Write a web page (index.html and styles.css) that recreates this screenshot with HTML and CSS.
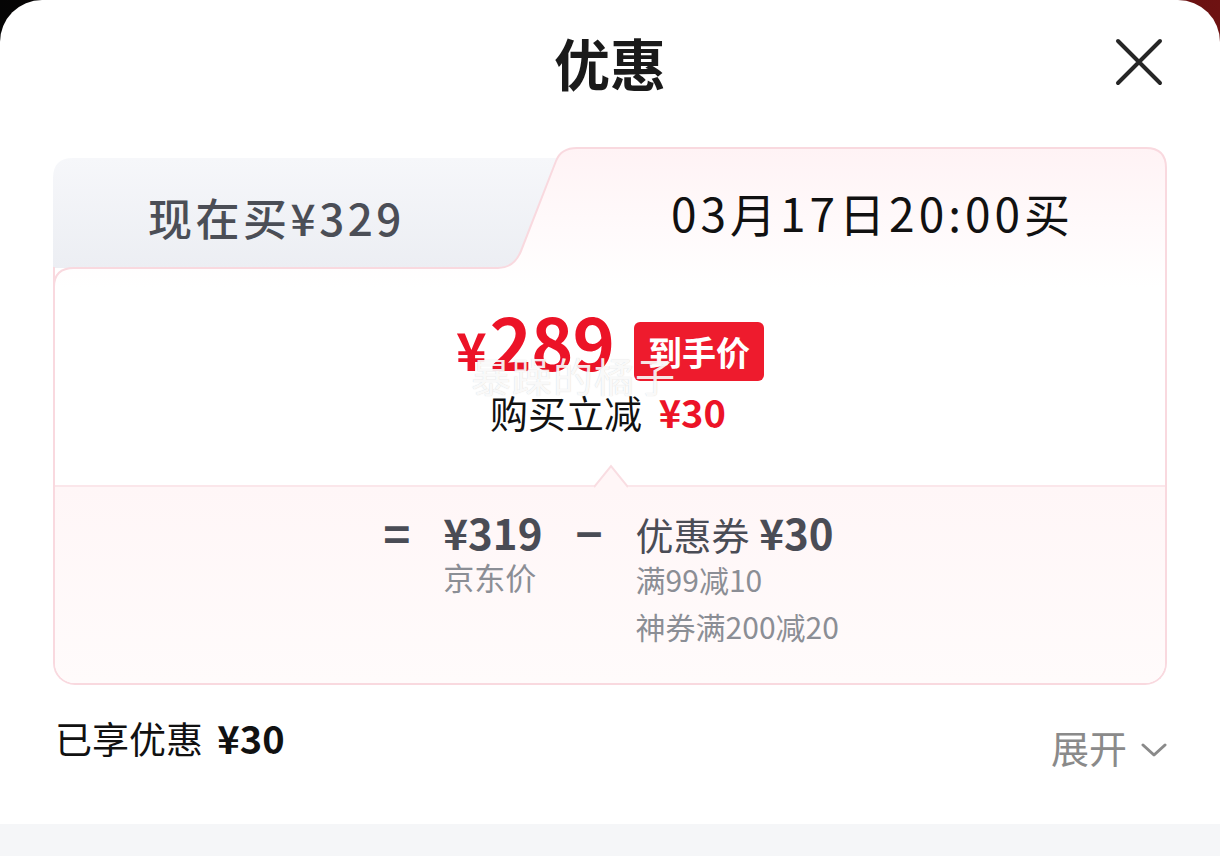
FILE: index.html
```html
<!DOCTYPE html>
<html lang="zh-CN">
<head>
  <meta charset="UTF-8">
  <meta name="viewport" content="width=device-width, initial-scale=1.0">
  <title>优惠</title>
  <link rel="stylesheet" href="styles.css">
</head>
<body>
<div class="sheet">
  <header class="sheet-head">
    <span></span>
    <h1 class="title">优惠</h1>
    <button class="close" aria-label="关闭">
      <svg viewBox="0 0 48 48" width="48" height="48">
        <path d="M3 3 L45 45 M45 3 L3 45" stroke="#262626" stroke-width="4" stroke-linecap="round" fill="none"/>
      </svg>
    </button>
  </header>

  <section class="card">
    <!-- tab outline drawn as one shape, sits behind the tab labels -->
    <svg class="tab-bg" viewBox="0 0 1114 140" width="1114" height="140">
      <defs>
        <linearGradient id="grayTab" x1="0" y1="0" x2="0" y2="1">
          <stop offset="0" stop-color="#f6f7fa"/>
          <stop offset="1" stop-color="#eceef3"/>
        </linearGradient>
        <linearGradient id="pinkTab" x1="0" y1="0" x2="0" y2="1">
          <stop offset="0" stop-color="#fff3f5"/>
          <stop offset="1" stop-color="#ffffff"/>
        </linearGradient>
      </defs>
      <path d="M0 31 Q0 11 20 11 L540 11 L540 121 L0 121 Z" fill="url(#grayTab)"/>
      <path d="M1 140 Q1 121 21 121 L445 121 Q461 121 468 104 L503 14 Q508 1 524 1 L1093 1 Q1113 1 1113 21 L1113 140 Z" fill="url(#pinkTab)"/>
      <path d="M1 140 Q1 121 21 121 L445 121 Q461 121 468 104 L503 14 Q508 1 524 1 L1093 1 Q1113 1 1113 21 L1113 140" fill="none" stroke="#f9d9df" stroke-width="2"/>
    </svg>

    <div class="tabs">
      <div class="tab tab-now">现在买¥329</div>
      <div class="tab tab-later">03月17日20:00买</div>
    </div>

    <div class="card-body">
      <div class="final">
        <div class="final-line">
          <span class="price"><span class="yen">¥</span>289</span>
          <span class="badge">到手价</span>
          <span class="watermark">暴躁的橘子</span>
        </div>
        <div class="saving">购买立减 <span class="saving-num">¥30</span></div>
      </div>

      <div class="breakdown">
        <svg class="notch" viewBox="0 0 34 24" width="34" height="24">
          <path d="M0 23 L17 2 L34 23" fill="#fff6f7" stroke="#f9dde2" stroke-width="2"/>
        </svg>
        <span class="op">=</span>
        <div class="term">
          <div class="amount">¥319</div>
          <div class="note">京东价</div>
        </div>
        <span class="op">−</span>
        <div class="term">
          <div class="amount"><span class="amount-label">优惠券</span> ¥30</div>
          <div class="note-list">
            <div>满99减10</div>
            <div>神券满200减20</div>
          </div>
        </div>
      </div>
    </div>
  </section>

  <div class="summary">
    <div class="enjoyed">已享优惠 <b>¥30</b></div>
    <div class="expand">
      展开
      <svg viewBox="0 0 26 16" width="26" height="16">
        <path d="M2 3 L13 13 L24 3" fill="none" stroke="#8a8a8a" stroke-width="3" stroke-linecap="round" stroke-linejoin="round"/>
      </svg>
    </div>
  </div>
</div>
<div class="bottom-band"></div>
</body>
</html>
```

FILE: styles.css
```css
* {
  box-sizing: border-box;
}

html, body {
  margin: 0;
  height: 100%;
}

body {
  font-family: "Noto Sans CJK SC", "Noto Sans", sans-serif;
  background: linear-gradient(90deg, #050505 0%, #2a0707 50%, #6e1212 100%);
  display: flex;
  flex-direction: column;
  overflow: hidden;
}

.sheet {
  height: 824px;
  background: #fff;
  border-radius: 42px 42px 0 0;
  padding: 0 53px;
}

.bottom-band {
  flex: 1;
  background: #f5f6f8;
}

/* header */
.sheet-head {
  display: grid;
  grid-template-columns: 1fr auto 1fr;
  align-items: start;
  height: 147px;
}

.title {
  margin: 0;
  padding-top: 34px;
  font-size: 56px;
  line-height: 56px;
  font-weight: 700;
  color: #1a1a1a;
}

.close {
  justify-self: end;
  margin: 38px 4px 0 0;
  padding: 0;
  border: 0;
  background: none;
  width: 48px;
  height: 48px;
}

.close svg {
  display: block;
}

/* card */
.card {
  position: relative;
}

.tab-bg {
  position: absolute;
  left: 0;
  top: 0;
  display: block;
}

.tabs {
  position: relative;
  display: flex;
  height: 120px;
}

.tab {
  display: flex;
  align-items: center;
  justify-content: center;
  white-space: nowrap;
}

.tab-now {
  flex: 0 0 445px;
  padding: 20px 0 0 2px;
  font-size: 44px;
  line-height: 50px;
  font-weight: 500;
  color: #4b4e56;
  letter-spacing: 3.5px;
}

.tab-later {
  flex: 1;
  padding: 10px 0 0 80px;
  font-size: 46px;
  line-height: 50px;
  color: #111;
  letter-spacing: 4px;
}

.card-body {
  position: relative;
  border: 2px solid #f9d9df;
  border-top: 0;
  border-radius: 0 0 22px 22px;
}

.final {
  height: 218px;
  padding-top: 41px;
  text-align: center;
}

.final-line {
  position: relative;
  display: flex;
  justify-content: center;
  align-items: center;
  height: 72px;
}

.price {
  font-size: 72px;
  line-height: 72px;
  font-weight: 700;
  color: #ec1327;
  letter-spacing: -1px;
}

.yen {
  font-size: 52px;
  margin-right: 4px;
}

.badge {
  margin: 14px 0 0 20px;
  padding: 0 14px;
  height: 59px;
  line-height: 59px;
  border-radius: 6px;
  background: #ee1b2d;
  color: #fff;
  font-size: 34px;
  font-weight: 700;
}

.watermark {
  position: absolute;
  left: 416px;
  top: 44px;
  font-size: 40px;
  line-height: 46px;
  color: rgba(255, 255, 255, 0.9);
  text-shadow: 0 0 1px rgba(120, 120, 120, 0.35);
  letter-spacing: 1px;
}

.saving {
  margin-top: 8px;
  padding-right: 4px;
  font-size: 38px;
  line-height: 48px;
  color: #111;
}

.saving-num {
  margin-left: 8px;
  font-size: 38px;
  font-weight: 700;
  color: #ec1327;
}

/* breakdown */
.breakdown {
  position: relative;
  display: flex;
  justify-content: center;
  align-items: flex-start;
  gap: 33px;
  height: 198px;
  padding: 20px 0 0 2px;
  border-top: 2px solid #fbe6ea;
  border-radius: 0 0 20px 20px;
  background: linear-gradient(180deg, #fff6f7 0%, #fffbfb 100%);
}

.notch {
  position: absolute;
  left: 50%;
  top: -23px;
  margin-left: -16px;
  display: block;
}

.op {
  font-size: 46px;
  line-height: 50px;
  font-weight: 700;
  color: #4a4c55;
}

.amount {
  padding-top: 3px;
  font-size: 42px;
  line-height: 44px;
  font-weight: 700;
  color: #4a4c55;
  white-space: nowrap;
}

.amount-label {
  font-size: 38px;
  font-weight: 400;
}

.note {
  margin-top: 3px;
  font-size: 31px;
  line-height: 40px;
  color: #8b8e95;
}

.note-list {
  font-size: 30px;
  line-height: 47px;
  color: #8b8e95;
}

/* summary row */
.summary {
  display: flex;
  justify-content: space-between;
  align-items: flex-start;
  padding: 30px 0 0 2px;
}

.enjoyed {
  font-size: 37px;
  line-height: 46px;
  color: #111;
}

.enjoyed b {
  margin-left: 6px;
  font-size: 38px;
}

.expand {
  display: flex;
  align-items: center;
  gap: 14px;
  margin-top: 9px;
  font-size: 38px;
  line-height: 46px;
  color: #8a8a8a;
}

.expand svg {
  display: block;
  margin-top: 6px;
}
```
